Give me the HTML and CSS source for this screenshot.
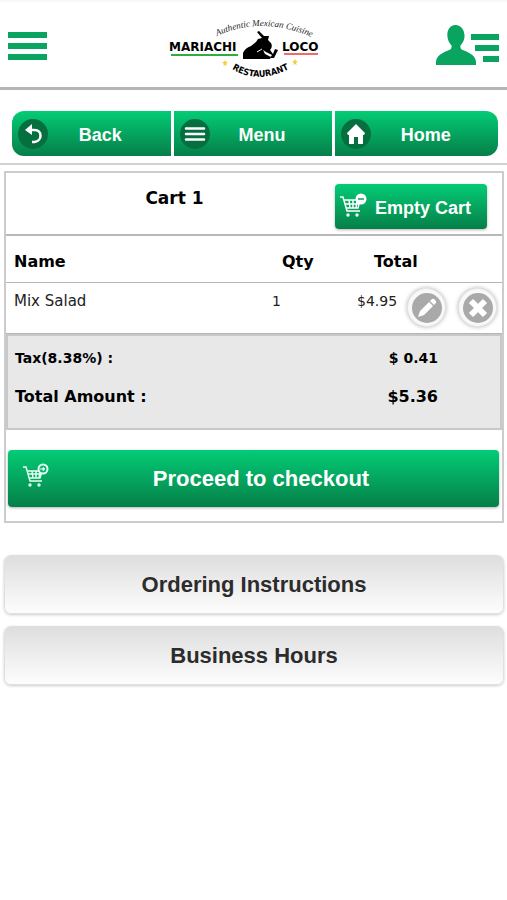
FILE: index.html
```
<!DOCTYPE html>
<html lang="en">
<head>
    <meta charset="UTF-8">
    <meta name="viewport" content="width=device-width, initial-scale=1.0">
    <title>Mariachi Loco Restaurant - Cart</title>
    <link rel="stylesheet" href="styles.css">
</head>
<body>

    <header class="header">
        <button class="icon-btn" type="button" aria-label="Open menu">
            <svg width="39" height="28" viewBox="0 0 39 28" fill="#0aa461">
                <path d="M0 0h39v6H0zM0 11h39v6H0zM0 22h39v6H0z"/>
            </svg>
        </button>

        <a class="logo" href="#" aria-label="Mariachi Loco Restaurant">
            <svg width="155" height="72" viewBox="0 0 155 72">
                <path id="arc-top" d="M53 27Q98 6 150 29" fill="none"/>
                <path id="arc-bottom" d="M68 60Q97 78 134 55" fill="none"/>
                <text class="logo-script"><textPath href="#arc-top">Authentic Mexican Cuisine</textPath></text>
                <text class="logo-name" x="5" y="42">MARIACHI</text>
                <text class="logo-name" x="118" y="42">LOCO</text>
                <path d="M7 45h67v2H7z" fill="#2fae3f"/>
                <path d="M120 44h34v2h-34z" fill="#ef6b6b"/>
                <!-- guitar player -->
                <path d="M79 50v-6q2-5 8-7l5-4 2-3 4-1-5-6 2-1 5 5 5 0-1 4 3 3q2 4-1 7l3 4 2-5 3 1-4 8h-4l2-3-6-3-3-2 2 4 6 3-1 2z"/>
                <path d="M93 43l5-3" stroke="#fff" stroke-width="1"/>
                <text class="logo-sub"><textPath href="#arc-bottom">RESTAURANT</textPath></text>
                <path d="M61 51l1 2h2l-2 2 1 2-2-1-2 1 1-2-2-2h2zM131 50l1 2h2l-2 2 1 2-2-1-2 1 1-2-2-2h2z" fill="#f2cf3c"/>
            </svg>
        </a>

        <button class="icon-btn" type="button" aria-label="My account">
            <svg width="63" height="42" viewBox="0 0 63 42" fill="#0aa461">
                <path d="M19.500 0C25 0 29 5 28.500 12c-.4 4-2 6-4 8.500-.6 2.500.3 4 3.500 5C35 28 40 32 40 37v3H0v-3c0-5 5-9 12-11.500 3.200-1 4-2.500 3.500-5-2-2.500-3.600-4.500-4-8.500C10.500 5 14 0 19.500 0z"/>
                <path d="M35 9h28v6H35zM39 20h24v6H39zM47 31h16v6H47z"/>
            </svg>
        </button>
    </header>

    <nav class="nav">
        <a class="nav-link" href="#">
            <svg width="30" height="30" viewBox="0 0 30 30">
                <circle cx="15" cy="15" r="15" fill="#056f40"/>
                <path d="M12 11h4.500c8 0 8 11 0 12H14" fill="none" stroke="#fff" stroke-width="2.500"/>
                <path d="M7 11l7-6v11z" fill="#fff"/>
            </svg>
            <span>Back</span>
        </a>
        <a class="nav-link" href="#">
            <svg width="30" height="30" viewBox="0 0 30 30">
                <circle cx="15" cy="15" r="15" fill="#056f40"/>
                <path d="M6 9.500h18M6 15h18M6 20.500h18" stroke="#fff" stroke-width="2.500" stroke-linecap="round"/>
            </svg>
            <span>Menu</span>
        </a>
        <a class="nav-link" href="#">
            <svg width="30" height="30" viewBox="0 0 30 30">
                <circle cx="15" cy="15" r="15" fill="#056f40"/>
                <path d="M15 5l9 9-1 2h-1v9h-5v-7h-4v7H8v-9H7l-1-2z" fill="#fff"/>
            </svg>
            <span>Home</span>
        </a>
    </nav>

    <main>
        <section class="cart">
            <div class="cart-top">
                <h1>Cart 1</h1>
                <button class="green-btn empty-btn" type="button">
                    <svg width="28" height="25" viewBox="0 0 28 25">
                        <path d="M1 4h3l4 14h13M5 7h16l-2 8H7.500M6 11h14M10 7l1 8M14 7v8M18 7l-1 8" fill="none" stroke="#fff" stroke-width="1.500"/>
                        <circle cx="9" cy="22" r="1.700" fill="#fff"/>
                        <circle cx="18" cy="22" r="1.700" fill="#fff"/>
                        <circle cx="22" cy="6" r="5.500" fill="#fff"/>
                        <path d="M19 6h6" stroke="#07a05c" stroke-width="1.500"/>
                    </svg>
                    <span>Empty Cart</span>
                </button>
            </div>

            <table class="items">
                <thead>
                    <tr>
                        <th class="name">Name</th>
                        <th class="qty">Qty</th>
                        <th class="total" colspan="2">Total</th>
                    </tr>
                </thead>
                <tbody>
                    <tr>
                        <td class="name">Mix Salad</td>
                        <td class="qty">1</td>
                        <td class="total">$4.95</td>
                        <td class="actions">
                            <div class="action-list">
                                <button class="round-btn" type="button" aria-label="Edit item">
                                    <svg width="30" height="30" viewBox="0 0 30 30">
                                        <circle cx="15" cy="15" r="15" fill="#a9a9a9"/>
                                        <path d="M6 24l2-6 9-9 4 4-9 9zM18 8l2-2q1-.5 2 0l2 2q.5 1 0 2l-2 2z" fill="#fff"/>
                                    </svg>
                                </button>
                                <button class="round-btn" type="button" aria-label="Remove item">
                                    <svg width="30" height="30" viewBox="0 0 30 30">
                                        <circle cx="15" cy="15" r="15" fill="#a9a9a9"/>
                                        <path d="M8 8l14 14M22 8L8 22" stroke="#fff" stroke-width="6"/>
                                    </svg>
                                </button>
                            </div>
                        </td>
                    </tr>
                </tbody>
            </table>

            <table class="summary">
                <tr class="tax">
                    <th>Tax(8.38%) :</th>
                    <td>$ 0.41</td>
                </tr>
                <tr class="amount">
                    <th>Total Amount :</th>
                    <td>$5.36</td>
                </tr>
            </table>

            <button class="green-btn checkout-btn" type="button">
                <svg width="28" height="25" viewBox="0 0 28 25">
                    <path d="M1 4h3l4 14h12M5 8h15l-2 7H7.500M6 11h13M10 8l1 7M14 8v7M18 8l-1 7" fill="none" stroke="#e4fff2" stroke-width="1.500"/>
                    <circle cx="8" cy="22" r="1.700" fill="#e4fff2"/>
                    <circle cx="17" cy="22" r="1.700" fill="#e4fff2"/>
                    <circle cx="21" cy="6" r="4.500" fill="#07b468" stroke="#e4fff2" stroke-width="2"/>
                    <path d="M18 6h3M21 4.500L23 6l-2 1.500z" fill="#e4fff2" stroke="#e4fff2"/>
                </svg>
                <span>Proceed to checkout</span>
            </button>
        </section>

        <div class="info">
            <button class="grey-btn" type="button">Ordering Instructions</button>
            <button class="grey-btn" type="button">Business Hours</button>
        </div>
    </main>

</body>
</html>
```
FILE: styles.css
```
* {
    box-sizing: border-box;
}
body {
    margin: 0;
    padding-bottom: 20px;
    font-family: Verdana, "DejaVu Sans", sans-serif;
    background-color: #fff;
    color: #000;
}
svg {
    display: block;
    flex: none;
}
button {
    margin: 0;
    padding: 0;
    border: 0;
    background: none;
    cursor: pointer;
}

/* header */
.header {
    display: flex;
    align-items: center;
    justify-content: space-between;
    height: 90px;
    padding: 0 8px;
    border-top: 2px solid #f8f8f8;
    border-bottom: 3px solid #b4b4b4;
}
.icon-btn {
    padding-top: 3px;
}
.logo-script {
    font: italic 9px "Liberation Serif", serif;
    fill: #222;
}
.logo-name {
    font: bold 12px "DejaVu Sans", sans-serif;
}
.logo-sub {
    font: bold 9px "Liberation Sans Narrow", "DejaVu Sans Condensed", sans-serif;
}

/* navigation */
.nav {
    display: flex;
    gap: 3px;
    padding: 21px 9px 7px 12px;
    border-bottom: 2px solid #d2d2d2;
}
.nav-link {
    display: flex;
    flex: 1 1 24px;
    align-items: center;
    height: 45px;
    padding: 0 18px 0 6px;
    background: linear-gradient(#03cc76, #057f48);
    color: #fff;
    font: bold 18px "Liberation Sans", Arial, sans-serif;
    text-decoration: none;
}
.nav-link:first-child {
    border-radius: 12px 0 0 12px;
}
.nav-link:last-child {
    flex-basis: 28px;
    border-radius: 0 12px 12px 0;
}
.nav-link span {
    flex: 1;
    padding-top: 3px;
    text-align: center;
}

/* cart */
.cart {
    margin: 6px 3px 0 4px;
    padding-bottom: 14px;
    border: 2px solid #ccc;
}
.cart-top {
    display: flex;
    height: 63px;
    padding: 11px 15px 0 8px;
    border-bottom: 2px solid #b8b8b8;
}
.cart-top h1 {
    flex: 1;
    margin: 0;
    font-size: 17px;
    line-height: 28px;
    text-align: center;
}
.green-btn {
    display: flex;
    align-items: center;
    border-radius: 4px;
    background: linear-gradient(#03cc76, #057f48);
    box-shadow: 0 1px 3px rgba(0, 0, 0, 0.3);
    color: #fff;
    font: bold 18px "Liberation Sans", Arial, sans-serif;
}
.empty-btn {
    gap: 8px;
    height: 45px;
    padding: 0 16px 0 4px;
}
.empty-btn span {
    padding-top: 3px;
}
.empty-btn svg {
    margin-bottom: 3px;
}
.checkout-btn svg {
    margin-bottom: 6px;
}

/* item list */
.items {
    width: 100%;
    border-collapse: collapse;
    table-layout: fixed;
}
.items th,
.items td {
    padding: 0;
    border-bottom: 1px solid #b4b4b4;
    text-align: left;
}
.items th {
    height: 46px;
    padding-top: 6px;
    font-size: 16px;
}
.items td {
    height: 51px;
    padding-top: 10px;
    font-size: 14px;
    line-height: 16px;
    vertical-align: top;
    color: #222;
}
.items .name {
    padding-left: 8px;
}
.items td.name {
    font-size: 15px;
}
.items .qty {
    width: 84px;
    padding-left: 16px;
}
.items td.qty {
    padding-left: 6px;
}
.items .total {
    width: 152px;
    padding-left: 24px;
}
.items td.total {
    padding-left: 7px;
}
.items .actions {
    padding-top: 5px;
}
.action-list {
    display: flex;
    justify-content: flex-end;
    gap: 12px;
    padding-right: 5px;
}
.round-btn {
    width: 39px;
    height: 39px;
    padding: 4px;
    border-radius: 50%;
    border: 1px solid #e4e4e4;
    background: #f8f8f8;
    box-shadow: 0 0 4px rgba(0, 0, 0, 0.3);
}

/* tax and total */
.summary {
    width: 100%;
    border: 2px solid #c8c8c8;
    border-spacing: 0;
    background: #e8e8e8;
    font-weight: bold;
}
.summary th,
.summary td {
    height: 44px;
    padding: 0 0 0 7px;
    text-align: left;
}
.summary td {
    padding: 0 62px 0 0;
    text-align: right;
}
.summary .tax {
    font-size: 14px;
}
.summary .amount {
    font-size: 16px;
}
.summary .amount > * {
    height: 48px;
    padding-bottom: 14px;
}

.checkout-btn {
    width: calc(100% - 5px);
    height: 57px;
    margin: 20px 3px 0 2px;
    padding: 0 27px 0 14px;
    font-size: 22px;
}
.checkout-btn span {
    flex: 1;
    padding-top: 2px;
}

/* info buttons */
.info {
    display: flex;
    flex-direction: column;
    gap: 12px;
    margin: 32px 3px 0 4px;
}
.grey-btn {
    height: 59px;
    padding-top: 2px;
    border: 1px solid #e0e0e0;
    border-radius: 7px;
    background: linear-gradient(#dedede, #fdfdfd);
    box-shadow: 0 1px 3px rgba(0, 0, 0, 0.2);
    color: #2c2c2c;
    font: bold 22px "Liberation Sans", Arial, sans-serif;
}
```
